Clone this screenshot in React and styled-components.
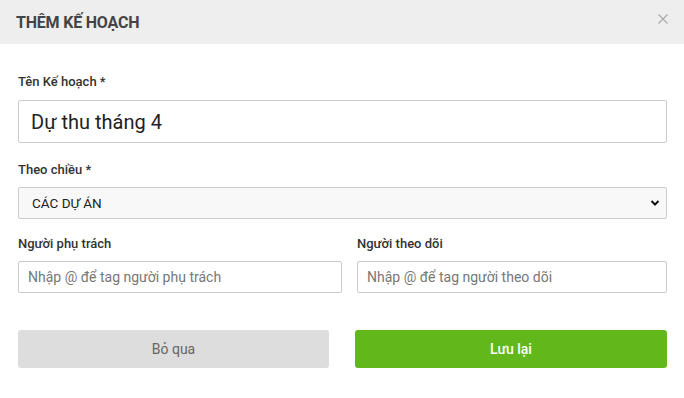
import React from "react";
import styled, { createGlobalStyle } from "styled-components";

const Global = createGlobalStyle`
  html, body { margin: 0; padding: 0; background: #fff; }
  body { font-family: Roboto, "Noto Sans", Arial, sans-serif; color: #333; }
  * { box-sizing: border-box; }
`;

const Modal = styled.div`
  width: 684px;
  height: 398px;
  background: #fff;
  display: flex;
  flex-direction: column;
`;

const Header = styled.div`
  height: 44px;
  background: #eeeeee;
  display: flex;
  align-items: center;
  justify-content: space-between;
  padding: 0 16px 0 16px;
`;

const Title = styled.h3`
  margin: 0;
  font-size: 16px;
  font-weight: 700;
  color: #444;
  letter-spacing: -0.2px;
`;

const Close = styled.button`
  border: none;
  background: none;
  padding: 0;
  width: 10px;
  height: 10px;
  align-self: flex-start;
  margin-top: 14px;
  display: flex;
  align-items: center;
  justify-content: center;
  cursor: pointer;
`;

const Body = styled.div`
  padding: 30px 17px 0 18px;
  display: flex;
  flex-direction: column;
`;

const Field = styled.div`
  display: flex;
  flex-direction: column;
  margin-bottom: ${(p) => p.$mb || 0}px;
`;

const Label = styled.label`
  font-size: 13px;
  font-weight: 500;
  color: #333;
  line-height: 16px;
  margin-bottom: ${(p) => p.$gap || 10}px;
`;

const Input = styled.input`
  width: 100%;
  height: ${(p) => (p.$big ? 43 : 32)}px;
  border: 1px solid #ccc;
  border-radius: 2px;
  padding: 0 ${(p) => (p.$big ? 12 : 9)}px;
  font-family: Roboto, Arial, sans-serif;
  font-size: ${(p) => (p.$big ? 20 : 14)}px;
  color: #222;
  background: #fff;
  outline: none;
  &::placeholder { color: #777; }
`;

const SelectBox = styled.div`
  position: relative;
  height: 32px;
  border: 1px solid #ccc;
  border-radius: 2px;
  background: #f8f8f8;
  display: flex;
  align-items: center;
  padding: 0 13px;
  font-size: 13.5px;
  color: #222;
`;

const Chevron = styled.svg`
  position: absolute;
  right: 6px;
  top: 50%;
  transform: translateY(-50%);
`;

const Row = styled.div`
  display: grid;
  grid-template-columns: ${(p) => p.$cols};
  column-gap: ${(p) => p.$gap}px;
  margin-top: ${(p) => p.$mt || 0}px;
`;

const Button = styled.button`
  height: 38px;
  border: none;
  border-radius: 3px;
  font-family: Roboto, Arial, sans-serif;
  font-size: 14px;
  font-weight: ${(p) => (p.$primary ? 500 : 400)};
  color: ${(p) => (p.$primary ? "#fff" : "#666")};
  background: ${(p) => (p.$primary ? "#62b81a" : "#dddddd")};
  cursor: pointer;
`;

export default function App() {
  return (
    <>
      <Global />
      <Modal>
        <Header>
          <Title>THÊM KẾ HOẠCH</Title>
          <Close aria-label="close">
            <svg width="10" height="10" viewBox="0 0 10 10">
              <path d="M0.5 0.5 L9.5 9.5 M9.5 0.5 L0.5 9.5" stroke="#aaa" strokeWidth="1.2" />
            </svg>
          </Close>
        </Header>
        <Body>
          <Field $mb={19}>
            <Label $gap={10}>Tên Kế hoạch *</Label>
            <Input $big defaultValue="Dự thu tháng 4" />
          </Field>
          <Field $mb={17}>
            <Label $gap={9}>Theo chiều *</Label>
            <SelectBox>
              CÁC DỰ ÁN
              <Chevron width="10" height="8" viewBox="0 0 10 8">
                <path d="M1.5 2 L5 5.5 L8.5 2" stroke="#111" strokeWidth="2" fill="none" />
              </Chevron>
            </SelectBox>
          </Field>
          <Row $cols="324px 310px" $gap={15}>
            <Field>
              <Label $gap={9}>Người phụ trách</Label>
              <Input placeholder="Nhập @ để tag người phụ trách" />
            </Field>
            <Field>
              <Label $gap={9}>Người theo dõi</Label>
              <Input placeholder="Nhập @ để tag người theo dõi" />
            </Field>
          </Row>
          <Row $cols="311px 312px" $gap={26} $mt={37}>
            <Button>Bỏ qua</Button>
            <Button $primary>Lưu lại</Button>
          </Row>
        </Body>
      </Modal>
    </>
  );
}
